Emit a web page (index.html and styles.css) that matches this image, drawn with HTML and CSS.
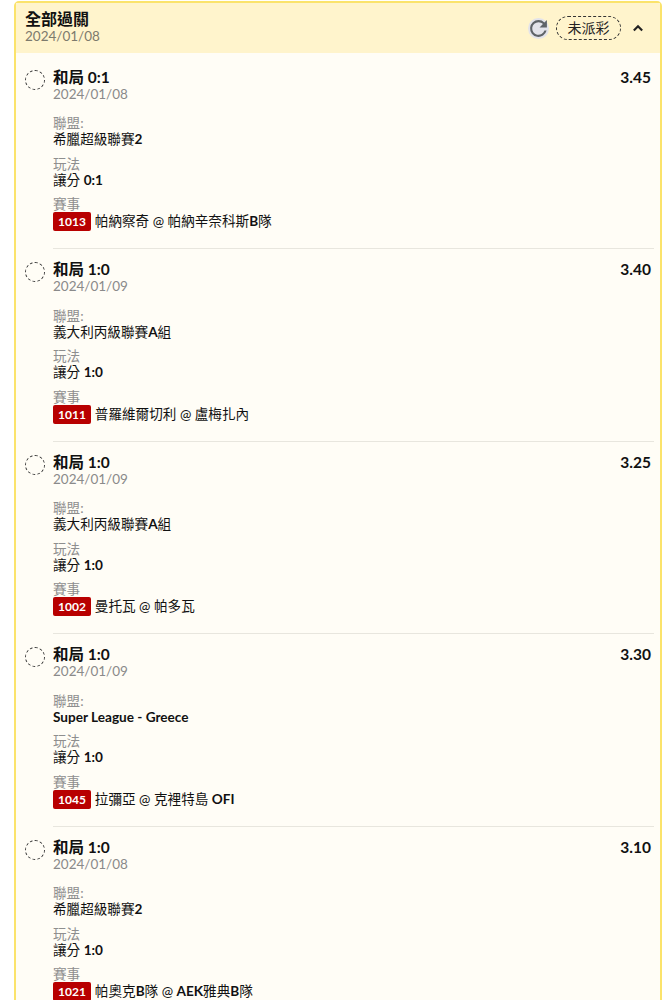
FILE: index.html
```html
<!DOCTYPE html>
<html>
<head>
    <title>全部過關</title>
    <link rel="stylesheet" href="styles.css">
</head>
<body>
    <div class="card">
        <div class="card-head">
            <div class="head-text">
                <div class="head-title">全部過關</div>
                <div class="date">2024/01/08</div>
            </div>
            <span class="refresh">
                <svg width="21" height="21" viewBox="2 2 20 20"><path fill="#5f6368" d="M17.65 6.35A7.96 7.96 0 0 0 12 4a8 8 0 1 0 7.73 10h-2.08A6 6 0 1 1 12 6c1.66 0 3.14.69 4.22 1.78L13 11h7V4l-2.35 2.35z"/></svg>
            </span>
            <span class="status">未派彩</span>
            <svg class="chevron" width="20" height="20" viewBox="0 0 24 24"><path fill="none" stroke="#222" stroke-width="2.6" d="M7 15l5-5 5 5"/></svg>
        </div>

        <div class="item">
            <span class="radio"></span>
            <div class="item-body">
                <div class="item-top"><span class="pick">和局 0:1</span><span class="odds">3.45</span></div>
                <div class="date">2024/01/08</div>
                <div class="field first"><div class="label">聯盟:</div><div class="value">希臘超級聯賽<b>2</b></div></div>
                <div class="field"><div class="label">玩法</div><div class="value">讓分 <b>0:1</b></div></div>
                <div class="field"><div class="label">賽事</div><div class="value"><span class="code">1013</span>帕納察奇 @ 帕納辛奈科斯<b>B</b>隊</div></div>
            </div>
        </div>

        <div class="item">
            <span class="radio"></span>
            <div class="item-body">
                <div class="item-top"><span class="pick">和局 1:0</span><span class="odds">3.40</span></div>
                <div class="date">2024/01/09</div>
                <div class="field first"><div class="label">聯盟:</div><div class="value">義大利丙級聯賽<b>A</b>組</div></div>
                <div class="field"><div class="label">玩法</div><div class="value">讓分 <b>1:0</b></div></div>
                <div class="field"><div class="label">賽事</div><div class="value"><span class="code">1011</span>普羅維爾切利 @ 盧梅扎內</div></div>
            </div>
        </div>

        <div class="item">
            <span class="radio"></span>
            <div class="item-body">
                <div class="item-top"><span class="pick">和局 1:0</span><span class="odds">3.25</span></div>
                <div class="date">2024/01/09</div>
                <div class="field first"><div class="label">聯盟:</div><div class="value">義大利丙級聯賽<b>A</b>組</div></div>
                <div class="field"><div class="label">玩法</div><div class="value">讓分 <b>1:0</b></div></div>
                <div class="field"><div class="label">賽事</div><div class="value"><span class="code">1002</span>曼托瓦 @ 帕多瓦</div></div>
            </div>
        </div>

        <div class="item">
            <span class="radio"></span>
            <div class="item-body">
                <div class="item-top"><span class="pick">和局 1:0</span><span class="odds">3.30</span></div>
                <div class="date">2024/01/09</div>
                <div class="field first"><div class="label">聯盟:</div><div class="value"><b>Super League - Greece</b></div></div>
                <div class="field"><div class="label">玩法</div><div class="value">讓分 <b>1:0</b></div></div>
                <div class="field"><div class="label">賽事</div><div class="value"><span class="code">1045</span>拉彌亞 @ 克裡特島 <b>OFI</b></div></div>
            </div>
        </div>

        <div class="item">
            <span class="radio"></span>
            <div class="item-body">
                <div class="item-top"><span class="pick">和局 1:0</span><span class="odds">3.10</span></div>
                <div class="date">2024/01/08</div>
                <div class="field first"><div class="label">聯盟:</div><div class="value">希臘超級聯賽<b>2</b></div></div>
                <div class="field"><div class="label">玩法</div><div class="value">讓分 <b>1:0</b></div></div>
                <div class="field"><div class="label">賽事</div><div class="value"><span class="code">1021</span>帕奧克<b>B</b>隊 @ <b>AEK</b>雅典<b>B</b>隊</div></div>
            </div>
        </div>
    </div>
</body>
</html>
```

FILE: styles.css
```css
html, body {
    height: 1000px;
    overflow: hidden;
}
body {
    margin: 0;
    padding: 1px 0 0 14px;
    box-sizing: border-box;
    background: #fff;
    font-family: Lato, "Noto Sans CJK TC", sans-serif;
    color: #111;
}
.card {
    border: 2px solid #fbe36b;
    border-radius: 5px;
    background: #fffdf6;
}
.card-head {
    display: flex;
    align-items: center;
    height: 50px;
    padding: 0 12px 0 9px;
    background: #fff4cc;
}
.head-text {
    flex: 1;
    margin-top: -3px;
}
.head-title {
    font-size: 16px;
    font-weight: 700;
    line-height: 18px;
    margin-bottom: 1px;
}
.date {
    font-size: 13.5px;
    line-height: 15px;
    color: #8a8a8a;
}
.head-text .date {
    color: #7d7a6c;
}
.refresh {
    display: flex;
    align-items: center;
    justify-content: center;
    width: 21px;
    height: 21px;
    border-radius: 50%;
    background: #e3e3ea;
}
.status {
    margin: 0 7px 0 7px;
    padding: 0 10.5px;
    height: 24px;
    line-height: 22px;
    box-sizing: border-box;
    border: 1px dashed #333;
    border-radius: 12px;
    font-size: 14px;
    color: #222;
}
.chevron {
    display: block;
}
.item {
    display: flex;
    padding: 11px 6px 0 9px;
    height: 192.5px;
    box-sizing: border-box;
}
.card-head + .item {
    padding-top: 14.5px;
    height: 196px;
}
.radio {
    flex: none;
    width: 20px;
    height: 20px;
    margin: 2px 8px 0 0;
    box-sizing: border-box;
    border: 1px dashed #333;
    border-radius: 50%;
}
.item-body {
    flex: 1;
    border-bottom: 1px solid #e8e6de;
}
.item-top {
    display: flex;
    justify-content: space-between;
    padding-right: 3px;
    line-height: 19px;
}
.pick {
    font-size: 15.5px;
    font-weight: 700;
}
.odds {
    font-size: 15.5px;
    font-weight: 700;
}
.field {
    margin-top: 7.5px;
}
.field.first {
    margin-top: 13.5px;
}
.label {
    font-size: 13.6px;
    line-height: 16px;
    color: #8e8e8e;
}
.value {
    font-size: 13.6px;
    line-height: 17px;
}
.code {
    display: inline-block;
    margin-right: 4px;
    padding: 0 5px;
    border-radius: 2px;
    background: #b80000;
    color: #fff;
    font-size: 12px;
    font-weight: 700;
    line-height: 19px;
}
```
